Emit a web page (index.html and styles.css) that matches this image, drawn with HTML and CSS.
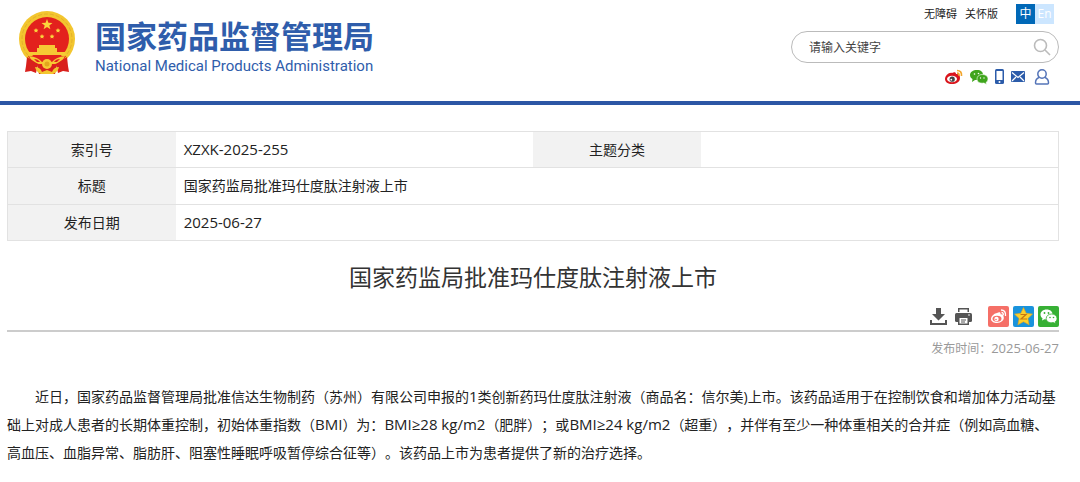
FILE: index.html
```
<!DOCTYPE html>
<html lang="zh-CN">
<head>
    <meta charset="UTF-8">
    <meta name="viewport" content="width=device-width, initial-scale=1.0">
    <title>国家药监局批准玛仕度肽注射液上市</title>
    <link rel="stylesheet" href="styles.css">
</head>
<body>
    <header class="header">
        <a href="#" class="logo">
            <svg class="emblem" viewBox="0 0 58 64" aria-hidden="true">
                <circle cx="29" cy="28" r="28" fill="#f3c62f"/>
                <circle cx="29" cy="28" r="25" fill="none" stroke="#e5b02a" stroke-width="1" stroke-dasharray="4 2"/>
                <circle cx="29" cy="28" r="22" fill="#e3211d"/>
                <path d="M29 8l1.400 3.800 4.100.1-3.200 2.500 1.100 3.900-3.400-2.300-3.400 2.300 1.100-3.900-3.200-2.500 4.100-.1z" fill="#fbd63c"/>
                <g fill="#fbd63c">
                    <path id="s" d="M18 17l.7 1.500 1.700.2-1.200 1.200.3 1.700-1.500-.8-1.500.8.3-1.700-1.200-1.200 1.700-.2z"/>
                    <use href="#s" x="22"/>
                    <use href="#s" x="6" y="6"/>
                    <use href="#s" x="16" y="6"/>
                </g>
                <path d="M21 34h16v3h2v4h8l1 3H10l1-3h8v-4h2z" fill="#f6c934"/>
                <path d="M10 45h38l-5 9H15z" fill="#e3211d"/>
                <path d="M11 45q9 1 13 6h10q4-5 13-6-3 7-10 8H21q-7-1-10-8z" fill="#f6c934"/>
                <path d="M16 48q4 0 6 3h-3zM42 48q-4 0-6 3h3z" fill="#e3211d"/>
                <path d="M9 46l11 7-2 9-5-2-6 1 1-6z" fill="#d9201c"/>
                <path d="M49 46l-11 7 2 9 5-2 6 1-1-6z" fill="#d9201c"/>
                <path d="M19 54h20l-2 9H21z" fill="#d9201c"/>
                <path d="M17 56q5 0 7 5l5-2 5 2q2-5 7-5-1 5-6 7H23q-5-2-6-7z" fill="#f3c62f"/>
                <circle cx="29" cy="53" r="5" fill="#f6c934"/>
                <circle cx="29" cy="53" r="2.500" fill="#e3a51d"/>
            </svg>
            <span class="logo-text">
                <span class="logo-cn">国家药品监督管理局</span>
                <span class="logo-en">National Medical Products Administration</span>
            </span>
        </a>
        <div class="tools">
            <nav class="top-links">
                <a href="#">无障碍</a>
                <a href="#">关怀版</a>
                <span class="lang"><a href="#" class="on">中</a><a href="#">En</a></span>
            </nav>
            <form class="search">
                <input type="text" placeholder="请输入关键字" aria-label="请输入关键字">
                <button type="button" aria-label="搜索">
                    <svg width="18" height="18" viewBox="0 0 18 18" fill="none" stroke="#bbb" stroke-width="1.600"><circle cx="7.500" cy="7.500" r="6"/><path d="M12 12l5 5"/></svg>
                </button>
            </form>
            <div class="media">
                <a href="#" aria-label="微博">
                    <svg width="18" height="16" viewBox="0 0 18 16"><path d="M7 4c2-1 4-1 4 1 3 0 4 1 4 4 0 4-4 6-8 6-4 0-7-2-7-5 0-3 4-7 7-6z" fill="#d9151c"/><ellipse cx="7" cy="10" rx="5" ry="3.300" fill="#fff"/><circle cx="7.200" cy="10.200" r="2.600" fill="#444"/><circle cx="6.300" cy="10.700" r=".9" fill="#fff"/><path d="M12 1.500q5 0 4.500 5.500M12 4q2.500 0 2 3" fill="none" stroke="#f2a52b" stroke-width="1.600"/></svg>
                </a>
                <a href="#" aria-label="微信">
                    <svg width="18" height="16" viewBox="0 0 18 16"><path d="M7 1c4 0 6 2 6 5 0 4-3 5-6 5l-2 0-3 2 .5-3C1 9 0 8 0 6c0-3 3-5 7-5z" fill="#3fa51c"/><path d="M12 5.500c4 0 6 2 6 4.500 0 1.500-1 3-2 3.500l.5 2-2.500-1.500c-5 .8-7-1.500-7-4 0-2.500 2-4.500 5-4.500z" fill="#3fa51c" stroke="#fff" stroke-width=".6"/><g fill="#fff"><circle cx="4.500" cy="5" r=".8"/><circle cx="8.500" cy="4.500" r=".8"/><circle cx="10.500" cy="9" r=".7"/><circle cx="14" cy="9" r=".7"/></g></svg>
                </a>
                <a href="#" aria-label="手机版">
                    <svg width="9" height="16" viewBox="0 0 9 16"><rect width="9" height="15" rx="1.500" fill="#2c5caa"/><path d="M1.500 2h6v9h-6z" fill="#fff"/><circle cx="4.500" cy="13" r="1" fill="#fff"/></svg>
                </a>
                <a href="#" aria-label="邮箱">
                    <svg width="14" height="12" viewBox="0 0 14 12"><rect width="14" height="11" rx="1" fill="#2c5caa"/><path d="M1 1.500l6 5 6-5M1 10l4-4M13 10L9 6" fill="none" stroke="#fff" stroke-width="1.200"/></svg>
                </a>
                <a href="#" aria-label="登录" class="user">
                    <svg width="16" height="16" viewBox="0 0 16 16" fill="none" stroke="#5474b8" stroke-width="1.500"><circle cx="8" cy="5" r="4.200"/><path d="M5 8.500C2 9.500 1.500 12 1.500 14q0 1 1 1h11q1 0 1-1c0-2-.5-4.500-3.500-5.500"/></svg>
                </a>
            </div>
        </div>
    </header>

    <main class="content">
        <table class="info">
            <tr>
                <th scope="row">索引号</th>
                <td class="wide num">XZXK-2025-255</td>
                <th scope="row">主题分类</th>
                <td></td>
            </tr>
            <tr>
                <th scope="row">标题</th>
                <td colspan="3">国家药监局批准玛仕度肽注射液上市</td>
            </tr>
            <tr>
                <th scope="row">发布日期</th>
                <td colspan="3" class="num">2025-06-27</td>
            </tr>
        </table>

        <h1>国家药监局批准玛仕度肽注射液上市</h1>

        <div class="share">
            <button type="button" aria-label="下载">
                <svg width="17" height="17" viewBox="0 0 17 17" fill="#555"><path d="M6 0h5v6h4l-6.500 6.500L2 6h4z"/><path d="M0 12h2v3h13v-3h2v5H0z"/></svg>
            </button>
            <button type="button" aria-label="打印" class="print">
                <svg width="17" height="17" viewBox="0 0 17 17"><path d="M3 0h11v4H3z" fill="#555"/><path d="M4.500 1.500h8V4h-8z" fill="#fff"/><rect y="5" width="17" height="9" rx="1.500" fill="#555"/><path d="M3 9h11v8H3z" fill="#555"/><path d="M4.500 10h8v5.500h-8z" fill="#fff"/><path d="M6 12h5M6 14h4" stroke="#555"/><circle cx="14" cy="7" r=".8" fill="#fff"/></svg>
            </button>
            <a href="#" class="weibo" aria-label="分享到微博">
                <svg width="21" height="21" viewBox="0 0 21 21"><path d="M9 7c2-1 4-1 3.500 1.200C15 8 16 9 15.500 10.500 17 14 13 17 9 17c-3 0-6-1.500-6-4 0-3 4-6 6-6z" fill="#fff"/><ellipse cx="9" cy="12.700" rx="4.500" ry="3" fill="#f56f67"/><circle cx="8.500" cy="13" r="2.200" fill="#fff"/><circle cx="8" cy="13.500" r=".8" fill="#f56f67"/><path d="M13 4q5 0 4.500 6M13.500 6.500q2 0 1.800 2.500" fill="none" stroke="#fff" stroke-width="1.300"/></svg>
            </a>
            <a href="#" class="qzone" aria-label="分享到QQ空间">
                <svg width="21" height="21" viewBox="0 0 21 21"><path d="M10.500 1.500l2.700 5.800 6.300.8-4.600 4.400 1.200 6.300-5.600-3.100-5.600 3.100 1.200-6.300L1.500 8.100l6.300-.8z" fill="#fcd02c" stroke="#e8a317" stroke-width=".6"/><path d="M7.500 8.500h5.500l-5 4.500h6" fill="none" stroke="#c9760e" stroke-width="1.200"/></svg>
            </a>
            <a href="#" class="wechat" aria-label="分享到微信">
                <svg width="21" height="21" viewBox="0 0 21 21"><path d="M8.500 3.500c4 0 6 2.300 6 5 0 3-3 5-6 5l-2-.3-2.500 1.300.5-2.200C3 11.300 2.500 10 2.500 8.500c0-2.700 2.500-5 6-5z" fill="#fff"/><path d="M13.500 8c3.300 0 5.500 2 5.500 4.500 0 1.500-.7 2.500-1.700 3.200l.4 1.900-2.200-1c-5 .8-7.300-1.600-7.300-4.100S10.500 8 13.500 8z" fill="#fff" stroke="#37b035" stroke-width=".8"/><g fill="#37b035"><circle cx="6.500" cy="7" r=".9"/><circle cx="10.500" cy="7" r=".9"/><circle cx="12" cy="11.500" r=".8"/><circle cx="15.500" cy="11.500" r=".8"/></g></svg>
            </a>
        </div>
        <p class="pub">发布时间：<time datetime="2025-06-27">2025-06-27</time></p>

        <article class="text">
            <p>近日，国家药品监督管理局批准信达生物制药（苏州）有限公司申报的<span class="num">1</span>类创新药玛仕度肽注射液（商品名：信尔美)上市。该药品适用于在控制饮食和增加体力活动基础上对成人患者的长期体重控制，初始体重指数（<span class="num">BMI</span>）为：<span class="num">BMI≥28 kg/m2</span>（肥胖）；或<span class="num">BMI≥24 kg/m2</span>（超重），并伴有至少一种体重相关的合并症（例如高血糖、高血压、血脂异常、脂肪肝、阻塞性睡眠呼吸暂停综合征等）。该药品上市为患者提供了新的治疗选择。</p>
        </article>
    </main>
</body>
</html>
```
FILE: styles.css
```
* { box-sizing: border-box; }
body { margin: 0; background: #fff; color: #222; font-family: "Open Sans", "Noto Sans CJK SC", sans-serif; font-size: 14px; text-spacing-trim: space-all; }
a { color: inherit; text-decoration: none; }
button { border: 0; padding: 0; background: none; cursor: pointer; }
svg { display: block; }
.num { font-size: 15px; }

.header { display: flex; justify-content: space-between; padding: 4px 21px 10px 18px; border-bottom: 4px solid #2c56a5; }
.logo { display: flex; gap: 19px; padding-top: 7px; color: #2f5dab; }
.emblem { width: 58px; height: 64px; }
.logo-text { display: flex; flex-direction: column; gap: 2px; padding-top: 5px; white-space: nowrap; }
.logo-cn { font-family: "Noto Sans CJK SC", sans-serif; font-size: 31px; font-weight: 700; line-height: 38px; }
.logo-en { font-family: Roboto, sans-serif; font-size: 15px; line-height: 20px; }

.tools { width: 268px; }
.top-links { display: flex; justify-content: flex-end; align-items: center; gap: 8px; padding-right: 5px; font-size: 11px; line-height: 20px; }
.lang { display: flex; margin-left: 10px; font-size: 12px; }
.lang a { width: 19px; background: #cce6ff; color: #fff; text-align: center; }
.lang .on { background: #0068b7; }
.search { display: flex; align-items: center; height: 32px; margin-top: 7px; padding: 0 7px 0 17px; border: 1px solid #bbb; border-radius: 16px; }
.search input { flex: 1; min-width: 0; border: 0; padding: 0; outline: 0; background: none; font-family: inherit; font-size: 12px; }
.search input::placeholder { color: #444; opacity: 1; }
.media { display: flex; justify-content: flex-end; align-items: center; gap: 7px; height: 28px; padding-right: 9px; }
.media .user { margin-left: 2px; }

.content { margin: 26px 21px 0 7px; }
.info { width: 100%; height: 110px; border-collapse: collapse; table-layout: fixed; border: 1px solid #e2e2e2; line-height: 19px; }
.info tr { border-bottom: 1px solid #e2e2e2; }
.info th { width: 16%; background: #f2f2f2; font-weight: 400; }
.info th, .info td { padding: 8px; }
.info .wide { width: 34%; }

h1 { margin: 19px 0 0; color: #333; font-size: 23px; font-weight: 400; line-height: 34px; text-align: center; }
.share { display: flex; justify-content: flex-end; align-items: center; gap: 4px; margin-top: 12px; padding-bottom: 3px; border-bottom: 2px solid #ccc; }
.share a { border-radius: 2px; }
.share .print { margin: 0 12px 0 4px; }
.weibo { background: #f56f67; }
.qzone { background: #1a93dc; }
.wechat { background: #37b035; }
.pub { margin: 6px 0 0; color: #999; font-size: 12px; line-height: 20px; text-align: right; }
.pub time { font-size: 13px; }

.text { padding: 24px 0; line-height: 28px; }
.text p { margin: 0; text-indent: 2em; }
.text .num { line-height: 20px; }
```
